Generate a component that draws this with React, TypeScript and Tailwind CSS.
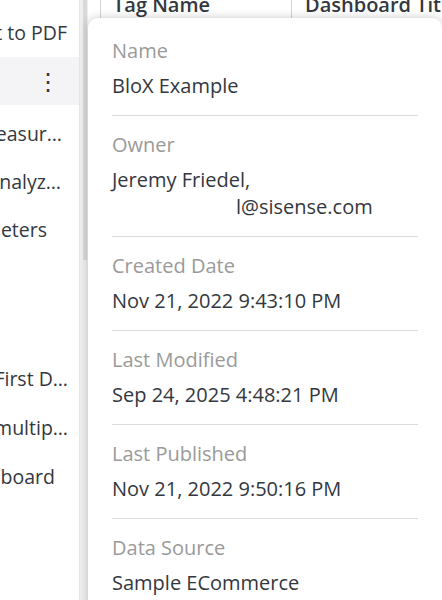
import * as React from "react";

const lowerRows: { text: string; cls: string }[] = [
  { text: "Measur…", cls: "h-[48px] pr-[17px]" },
  { text: "Analyz…", cls: "h-[48px] pr-[18px]" },
  { text: "Parameters", cls: "h-[48px] pr-[32px]" },
  { text: "", cls: "h-[48px]" },
  { text: "", cls: "h-[52px]" },
  { text: "My First D…", cls: "h-[49px] pr-[11px]" },
  { text: "Use multip…", cls: "h-[49px] pr-[11px]" },
  { text: "Dashboard", cls: "h-[49px] pr-[24px]" },
];

const fields: { label: string; value: React.ReactNode; first?: boolean; last?: boolean }[] = [
  { label: "Name", value: "BloX Example", first: true },
  {
    label: "Owner",
    value: (
      <>
        <div>Jeremy Friedel,</div>
        <div className="pl-[124px]">l@sisense.com</div>
      </>
    ),
  },
  { label: "Created Date", value: "Nov 21, 2022 9:43:10 PM" },
  { label: "Last Modified", value: "Sep 24, 2025 4:48:21 PM" },
  { label: "Last Published", value: "Nov 21, 2022 9:50:16 PM" },
  { label: "Data Source", value: "Sample ECommerce", last: true },
];

export default function App() {
  return (
    <div
      className="relative flex h-[600px] w-[442px] overflow-hidden bg-white text-[#333840]"
      style={{ fontFamily: '"Open Sans", "Noto Sans", sans-serif' }}
    >
      {/* left menu, scrolled partly off screen */}
      <div className="w-[80px] shrink-0 overflow-hidden border-r border-[#e6e6e6] bg-white pt-[9px] text-[19.5px]">
        <div className="flex h-[48px] items-center justify-end whitespace-nowrap pr-[12px]">Export to PDF</div>
        <div className="flex h-[48px] items-center justify-end bg-[#f4f4f6] pr-[19px] text-[24px] leading-none">
          ⋮
        </div>
        <div className="h-[5px]" />
        {lowerRows.map((r, i) => (
          <div key={i} className={`flex items-center justify-end whitespace-nowrap ${r.cls}`}>
            {r.text}
          </div>
        ))}
      </div>

      {/* scrollbar track */}
      <div className="w-[8px] shrink-0 bg-[#efefef]">
        <div className="ml-[3px] h-[260px] w-[4px] bg-[#d9d9d9]" />
      </div>

      {/* table behind popup */}
      <div className="flex-1 bg-white">
        <div className="ml-[12px] flex h-[18px] overflow-hidden border-l border-[#d5d5d5] text-[20px] font-semibold text-[#333840]">
          <div className="-mt-[10px] w-[191px] shrink-0 border-r border-[#d5d5d5] pl-[12px] whitespace-nowrap">
            Tag Name
          </div>
          <div className="-mt-[10px] pl-[13px] whitespace-nowrap">Dashboard Title</div>
        </div>
      </div>

      {/* info popup */}
      <div className="absolute left-[88px] top-[18px] h-[600px] w-[354px] rounded-t-[10px] bg-white px-[24px] shadow-[0_0_10px_rgba(0,0,0,0.22)]">
        {fields.map((f) => (
          <div
            key={f.label}
            className={`${f.first ? "pt-[21px]" : "pt-[17px]"} pb-[16px] ${f.last ? "" : "border-b border-[#dcdcdc]"}`}
          >
            <div className="text-[20px] leading-[24px] text-[#9a9a9a]">{f.label}</div>
            <div className="mt-[9px] whitespace-nowrap text-[20px] leading-[27px] text-[#333840]">{f.value}</div>
          </div>
        ))}
      </div>
    </div>
  );
}
